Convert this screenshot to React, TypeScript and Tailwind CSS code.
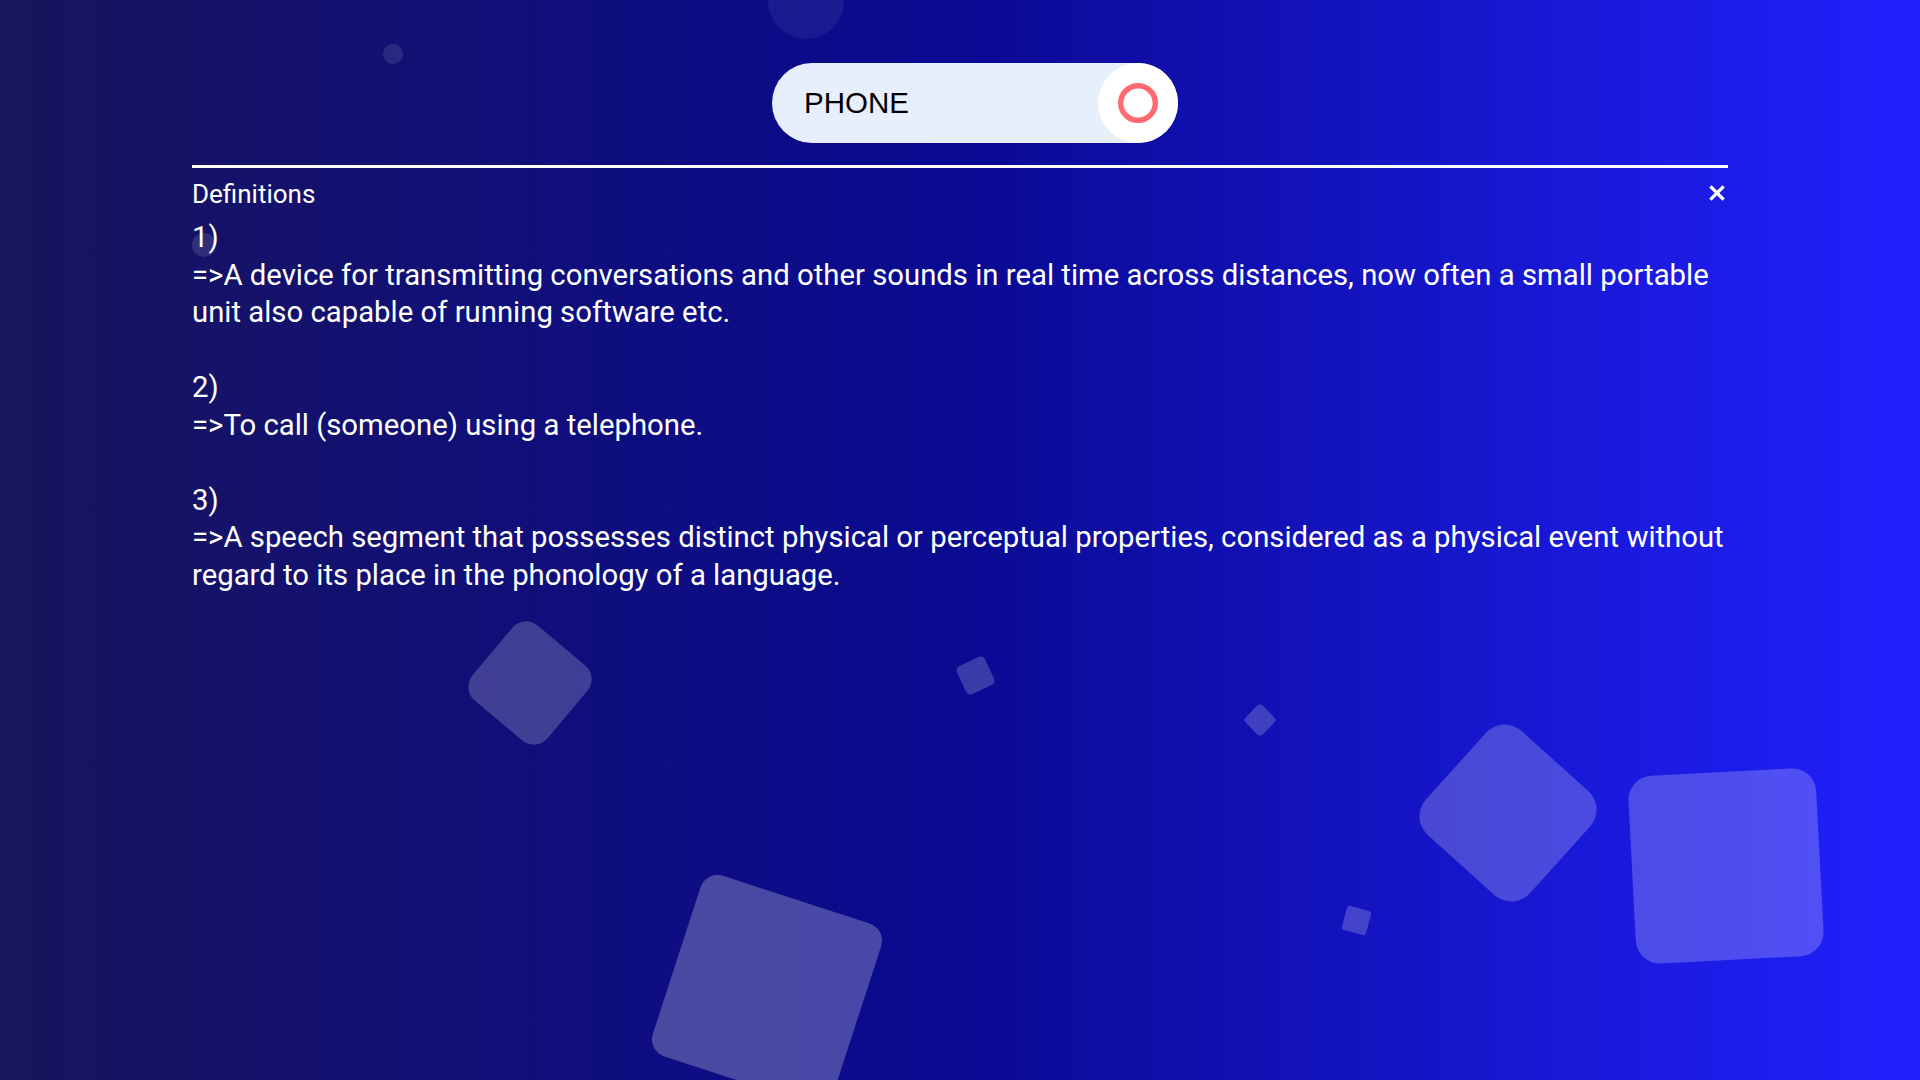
import React from "react";

const defs = [
  "A device for transmitting conversations and other sounds in real time across distances, now often a small portable unit also capable of running software etc.",
  "To call (someone) using a telephone.",
  "A speech segment that possesses distinct physical or perceptual properties, considered as a physical event without regard to its place in the phonology of a language.",
];

function Shapes() {
  return (
    <div className="absolute inset-0 overflow-hidden pointer-events-none">
      <div className="absolute left-[768px] top-[-37px] w-[76px] h-[76px] rounded-full bg-white/[0.06]" />
      <div className="absolute left-[383px] top-[44px] w-[20px] h-[20px] rounded-full bg-white/10" />
      <div className="absolute left-[192px] top-[233px] w-[24px] h-[24px] rounded-full bg-white/[0.12]" />
      <div className="absolute left-[481px] top-[634px] w-[98px] h-[98px] rounded-[18px] rotate-[40deg] bg-white/20" />
      <div className="absolute left-[960px] top-[660px] w-[31px] h-[31px] rounded-[5px] rotate-[-25deg] bg-white/20" />
      <div className="absolute left-[1248px] top-[708px] w-[24px] h-[24px] rounded-[4px] rotate-[45deg] bg-white/20" />
      <div className="absolute left-[1438px] top-[743px] w-[140px] h-[140px] rounded-[25px] rotate-[42deg] bg-white/[0.22]" />
      <div className="absolute left-[1344px] top-[908px] w-[25px] h-[25px] rounded-[3px] rotate-[15deg] bg-white/20" />
      <div className="absolute left-[1632px] top-[772px] w-[188px] h-[188px] rounded-[24px] rotate-[-3deg] bg-white/[0.22]" />
      <div className="absolute left-[672px] top-[895px] w-[190px] h-[190px] rounded-[18px] rotate-[18deg] bg-white/25" />
    </div>
  );
}

export default function App() {
  return (
    <div className="relative w-full h-[1080px] overflow-hidden bg-[linear-gradient(to_right,#18155c_0%,#0a0a92_50%,#2121ff_100%)]">
      <Shapes />
      <div className="relative z-10">
        <div className="flex justify-center pt-[63px] pl-[30px]">
          <div className="flex items-center w-[406px] h-[80px] rounded-full bg-[#e8effc]">
            <input
              readOnly
              value="PHONE"
              className="flex-1 min-w-0 h-full bg-transparent outline-none pl-[32px] text-[29.5px] text-black font-['Liberation_Sans',Arial,sans-serif]"
            />
            <div className="w-[80px] h-[80px] rounded-full bg-white flex items-center justify-center shrink-0">
              <svg width="42" height="42" viewBox="0 0 42 42">
                <circle cx="21" cy="21" r="17.3" fill="none" stroke="#ff6b70" strokeWidth="5.4" />
              </svg>
            </div>
          </div>
        </div>
        <div className="w-[1536px] mx-auto mt-[22px] border-t-[3px] border-white text-white font-['Roboto','Noto_Sans',sans-serif]">
          <div className="flex items-center justify-between mt-[8px] h-[36px]">
            <span className="text-[26px] leading-[36px]">Definitions</span>
            <svg width="16" height="16" viewBox="0 0 16 16" className="mr-[3px] -mt-[2px]">
              <path d="M2.5 2.5 L13.5 13.5 M13.5 2.5 L2.5 13.5" stroke="white" strokeWidth="3.2" strokeLinecap="square" />
            </svg>
          </div>
          <div className="mt-[7px] text-[29.3px] leading-[37.5px]">
            {defs.map((d, i) => (
              <div key={i} className="mb-[37.5px]">
                <div>{i + 1})</div>
                <div>{"=>" + d}</div>
              </div>
            ))}
          </div>
        </div>
      </div>
    </div>
  );
}
